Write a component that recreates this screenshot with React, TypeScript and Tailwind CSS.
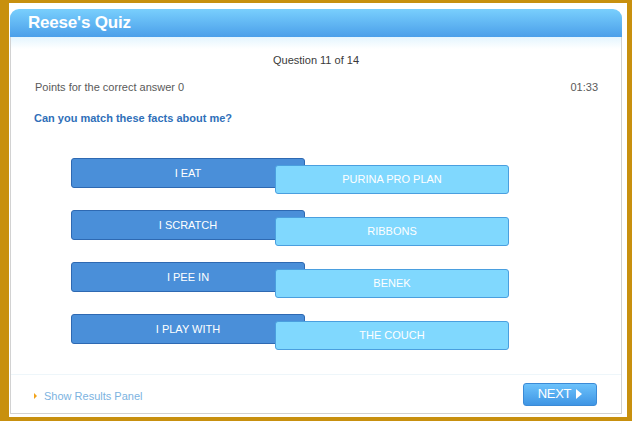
const pairs = [
  { left: 'I EAT', right: 'PURINA PRO PLAN' },
  { left: 'I SCRATCH', right: 'RIBBONS' },
  { left: 'I PEE IN', right: 'BENEK' },
  { left: 'I PLAY WITH', right: 'THE COUCH' },
]

export default function App() {
  return (
    <div className="w-[632px] h-[421px] bg-[#c8900e] pt-[3px] pl-[9px] pr-[5px] pb-[4px] font-['Liberation_Sans',Arial,sans-serif]">
      <div className="h-full bg-white pt-[7px] pl-[1px] pr-[5px] pb-[3px]">
        <div className="h-full flex flex-col rounded-t-[9px] border-x border-b border-[#d2d2d2]">
          {/* header */}
          <div className="h-[28px] -mx-px -mt-px rounded-t-[9px] bg-gradient-to-b from-[#79cffd] to-[#4b9fe9] flex items-center px-[18px]">
            <span className="text-[17px] font-bold text-white tracking-[-0.2px]">Reese's Quiz</span>
          </div>
          <div className="h-[12px] bg-gradient-to-b from-[#e4f5fe] to-white" />

          <div className="mt-[4px] text-center text-[11px] leading-[14px] text-[#3a3a3a]">Question 11 of 14</div>
          <div className="mt-[13px] flex justify-between pl-[24px] pr-[23px] text-[11px] leading-[14px] text-[#5a5a5a]">
            <span>Points for the correct answer 0</span>
            <span>01:33</span>
          </div>
          <div className="mt-[17px] pl-[23px] text-[11px] leading-[14px] font-bold text-[#2f6fb9]">
            Can you match these facts about me?
          </div>

          {/* matching rows */}
          <div className="mt-[33px] pl-[60px] flex flex-col gap-[16px]">
            {pairs.map((p) => (
              <div key={p.left} className="flex items-start">
                <div className="w-[234px] h-[30px] rounded-[3px] bg-[#4a8fd9] border border-[#2e69b2] flex items-center justify-center text-[11px] text-white">
                  {p.left}
                </div>
                <div className="-ml-[30px] mt-[7px] w-[234px] h-[29px] rounded-[3px] bg-[#80d8fe] border border-[#4a9fdf] flex items-center justify-center text-[11px] text-white">
                  {p.right}
                </div>
              </div>
            ))}
          </div>

          {/* footer */}
          <div className="mt-auto border-t border-[#eef6fa] h-[39px] flex items-center justify-between pl-[23px] pr-[24px]">
            <div className="flex items-center gap-[7px] mt-[4px]">
              <span className="w-0 h-0 border-y-[3px] border-y-transparent border-l-[3px] border-l-[#f2a31b]" />
              <span className="text-[11px] text-[#7cb3df]">Show Results Panel</span>
            </div>
            <div className="w-[74px] h-[23px] rounded-[3px] bg-gradient-to-b from-[#6cc2fb] to-[#3f95e4] border border-[#3b8ad6] flex items-center justify-center gap-[5px]">
              <span className="text-[13px] text-white tracking-[-0.3px]">NEXT</span>
              <span className="w-0 h-0 border-y-[5px] border-y-transparent border-l-[6px] border-l-white" />
            </div>
          </div>
        </div>
      </div>
    </div>
  )
}
